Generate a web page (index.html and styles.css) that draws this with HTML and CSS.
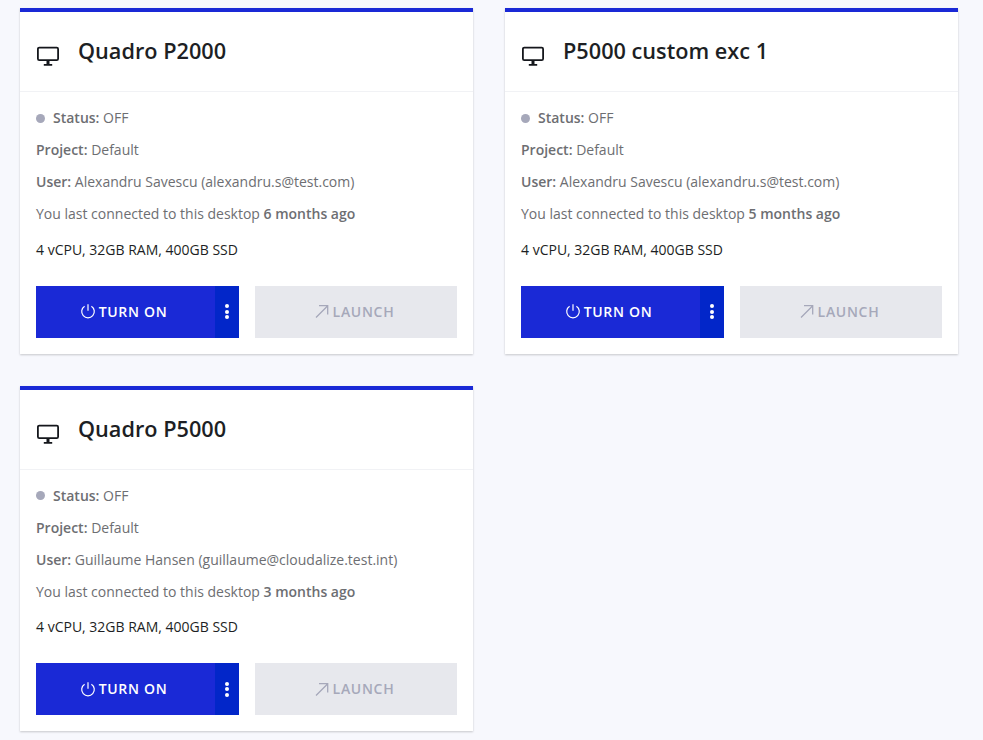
FILE: index.html
```html
<!DOCTYPE html>
<html lang="en">
<head>
    <meta charset="utf-8">
    <meta name="viewport" content="width=device-width, initial-scale=1.0">
    <title>Desktops</title>
    <link rel="stylesheet" href="styles.css">
</head>
<body>
    <main class="desktop-grid">
        <section class="card">
            <header class="card-head">
                <svg class="monitor" width="24" height="24" viewBox="0 0 24 24"><rect x="1.9" y="3.6" width="20.2" height="12.6" rx="1.4" fill="none" stroke="#15171c" stroke-width="1.8"/><path d="M10.5 17h3v3h2.7v1.7H7.8V20h2.7z" fill="#15171c"/></svg>
                <h2>Quadro P2000</h2>
            </header>
            <div class="card-body">
                <p class="row"><span class="dot"></span><b>Status:</b> OFF</p>
                <p class="row"><b>Project:</b> Default</p>
                <p class="row"><b>User:</b> Alexandru Savescu (alexandru.s@test.com)</p>
                <p class="row">You last connected to this desktop <b>6 months ago</b></p>
                <p class="specs">4 vCPU, 32GB RAM, 400GB SSD</p>
                <div class="actions">
                    <div class="split">
                        <button class="btn-on"><svg width="16" height="16" viewBox="0 0 16 16"><path d="M4.6 3.2a6.3 6.3 0 1 0 6.8 0M8 1.2v6.6" fill="none" stroke="#fff" stroke-width="1.2"/></svg>TURN ON</button>
                        <button class="btn-more"><span></span><span></span><span></span></button>
                    </div>
                    <button class="btn-launch"><svg width="16" height="16" viewBox="0 0 16 16"><path d="M2 14.5 13.5 3M5 2.7h8.7v8.7" fill="none" stroke="#a6a8ba" stroke-width="1.3"/></svg>LAUNCH</button>
                </div>
            </div>
        </section>
        <section class="card">
            <header class="card-head">
                <svg class="monitor" width="24" height="24" viewBox="0 0 24 24"><rect x="1.9" y="3.6" width="20.2" height="12.6" rx="1.4" fill="none" stroke="#15171c" stroke-width="1.8"/><path d="M10.5 17h3v3h2.7v1.7H7.8V20h2.7z" fill="#15171c"/></svg>
                <h2>P5000 custom exc 1</h2>
            </header>
            <div class="card-body">
                <p class="row"><span class="dot"></span><b>Status:</b> OFF</p>
                <p class="row"><b>Project:</b> Default</p>
                <p class="row"><b>User:</b> Alexandru Savescu (alexandru.s@test.com)</p>
                <p class="row">You last connected to this desktop <b>5 months ago</b></p>
                <p class="specs">4 vCPU, 32GB RAM, 400GB SSD</p>
                <div class="actions">
                    <div class="split">
                        <button class="btn-on"><svg width="16" height="16" viewBox="0 0 16 16"><path d="M4.6 3.2a6.3 6.3 0 1 0 6.8 0M8 1.2v6.6" fill="none" stroke="#fff" stroke-width="1.2"/></svg>TURN ON</button>
                        <button class="btn-more"><span></span><span></span><span></span></button>
                    </div>
                    <button class="btn-launch"><svg width="16" height="16" viewBox="0 0 16 16"><path d="M2 14.5 13.5 3M5 2.7h8.7v8.7" fill="none" stroke="#a6a8ba" stroke-width="1.3"/></svg>LAUNCH</button>
                </div>
            </div>
        </section>
        <section class="card">
            <header class="card-head">
                <svg class="monitor" width="24" height="24" viewBox="0 0 24 24"><rect x="1.9" y="3.6" width="20.2" height="12.6" rx="1.4" fill="none" stroke="#15171c" stroke-width="1.8"/><path d="M10.5 17h3v3h2.7v1.7H7.8V20h2.7z" fill="#15171c"/></svg>
                <h2>Quadro P5000</h2>
            </header>
            <div class="card-body">
                <p class="row"><span class="dot"></span><b>Status:</b> OFF</p>
                <p class="row"><b>Project:</b> Default</p>
                <p class="row"><b>User:</b> Guillaume Hansen (guillaume@cloudalize.test.int)</p>
                <p class="row">You last connected to this desktop <b>3 months ago</b></p>
                <p class="specs">4 vCPU, 32GB RAM, 400GB SSD</p>
                <div class="actions">
                    <div class="split">
                        <button class="btn-on"><svg width="16" height="16" viewBox="0 0 16 16"><path d="M4.6 3.2a6.3 6.3 0 1 0 6.8 0M8 1.2v6.6" fill="none" stroke="#fff" stroke-width="1.2"/></svg>TURN ON</button>
                        <button class="btn-more"><span></span><span></span><span></span></button>
                    </div>
                    <button class="btn-launch"><svg width="16" height="16" viewBox="0 0 16 16"><path d="M2 14.5 13.5 3M5 2.7h8.7v8.7" fill="none" stroke="#a6a8ba" stroke-width="1.3"/></svg>LAUNCH</button>
                </div>
            </div>
        </section>
    </main>
</body>
</html>
```

FILE: styles.css
```css
html, body {
    height: 100%;
    overflow: hidden;
}

body {
    font-family: "Open Sans", "Noto Sans", sans-serif;
    margin: 0;
    padding: 8px 25px 0 20px;
    background-color: #f7f8fd;
    color: #6d6e72;
    font-size: 14px;
}

.desktop-grid {
    display: grid;
    grid-template-columns: 453px 453px;
    column-gap: 32px;
    row-gap: 32px;
    align-items: start;
}

.card {
    background-color: #ffffff;
    border-top: 4px solid #1a29d6;
    box-shadow: 0 1px 2px rgba(0, 0, 0, 0.2);
    height: 341.6px;
}

.card-head {
    display: flex;
    align-items: center;
    height: 79px;
    padding-left: 16px;
    border-bottom: 1px solid #f1f2f5;
}

.monitor {
    flex: none;
    margin-top: 9px;
}

.card-head h2 {
    margin: 0 0 1.6px 18px;
    font-size: 21.7px;
    font-weight: 600;
    color: #1d1f24;
}

.card-body {
    padding: 10px 16px 0;
}

.row {
    margin: 0;
    height: 32px;
    line-height: 32px;
    display: flex;
    align-items: center;
    white-space: pre-wrap;
}

.row b {
    font-weight: 600;
}

.dot {
    width: 9px;
    height: 9px;
    border-radius: 50%;
    background-color: #a6a8ba;
    margin-right: 8px;
}

.specs {
    margin: 3.6px 0 0;
    height: 32px;
    line-height: 32px;
    color: #1d1f24;
}

.actions {
    display: flex;
    justify-content: space-between;
    margin-top: 20px;
}

.split {
    display: flex;
    width: 203px;
    height: 52px;
}

button {
    border: none;
    padding: 0 4px 1px 0;
    font-family: inherit;
    font-size: 14px;
    font-weight: 600;
    letter-spacing: 0.7px;
    display: flex;
    align-items: center;
    justify-content: center;
    gap: 3px;
}

.btn-on {
    flex: 1;
    background-color: #1a29d6;
    color: #ffffff;
}

.btn-more {
    flex: none;
    width: 24px;
    padding: 0;
    background-color: #0226c9;
    flex-direction: column;
    gap: 1.5px;
}

.btn-more span {
    width: 4px;
    height: 4px;
    border-radius: 50%;
    background-color: #ffffff;
}

.btn-launch {
    width: 202px;
    height: 52px;
    background-color: #e7e8ed;
    color: #a6a8ba;
}
```
